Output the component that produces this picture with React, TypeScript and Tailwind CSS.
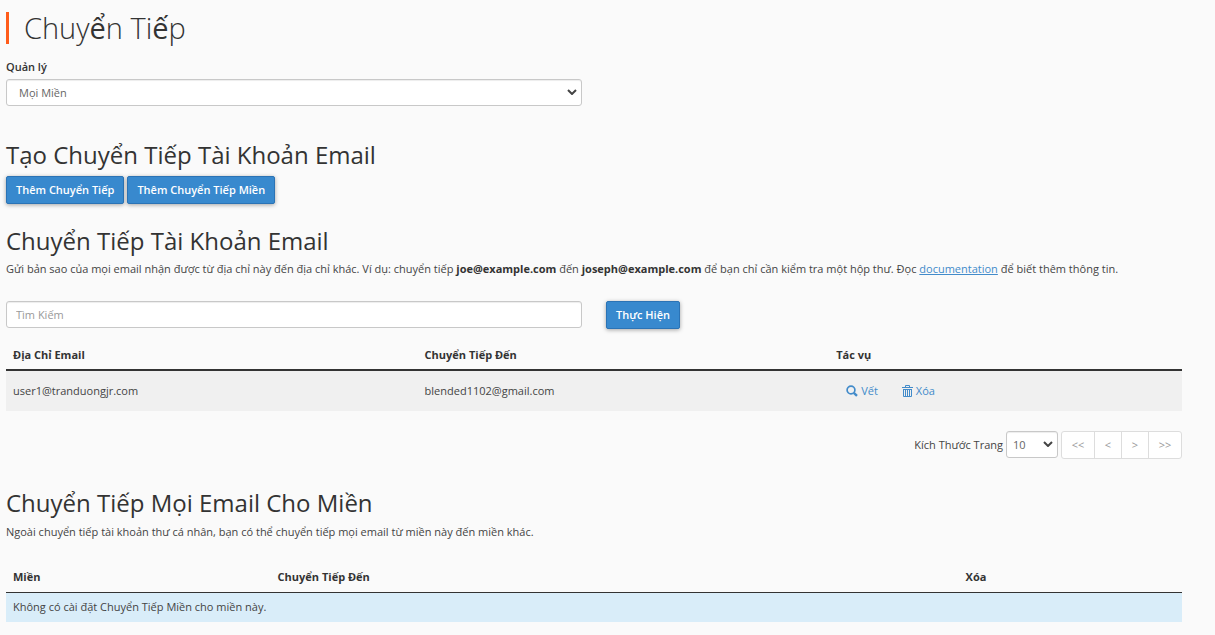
import type { ReactNode } from 'react';

const field =
  'rounded-[3px] border border-[#c8c8c8] bg-white text-[11px] text-[#666] shadow-[inset_0_1px_1px_rgba(0,0,0,0.075)] outline-none';

function PrimaryButton({ children }: { children: ReactNode }) {
  return (
    <button
      type="button"
      className="rounded-xs border border-[#2b73b5] bg-[#3889ce] px-[9px] py-[5px] text-[11px] leading-4 font-semibold text-white shadow-[0_1px_4px_rgba(0,0,0,0.35)]"
    >
      {children}
    </button>
  );
}

function Chevron({ className }: { className: string }) {
  return (
    <svg viewBox="0 0 10 6" className={className} fill="none" stroke="#444" strokeWidth="2" aria-hidden="true">
      <path d="M1 1l4 4 4-4" />
    </svg>
  );
}

function SearchIcon() {
  return (
    <svg viewBox="0 0 12 12" className="size-3" fill="none" stroke="#428bca" aria-hidden="true">
      <circle cx="5" cy="5" r="3.9" strokeWidth="1.7" />
      <path d="M7.8 7.8l3.2 3" strokeWidth="2.4" />
    </svg>
  );
}

function TrashIcon() {
  return (
    <svg viewBox="0 0 11 12" className="h-3 w-[11px]" fill="none" stroke="#428bca" strokeWidth="1" aria-hidden="true">
      <path d="M0 2.5h11M3.5 2.5v-2h4v2M1.5 4v7.5h8V4M1 4.5h9M3.5 4.5v7M5.5 4.5v7M7.5 4.5v7" />
    </svg>
  );
}

function SectionTitle({ children }: { children: ReactNode }) {
  return <h2 className="text-2xl leading-7 font-normal text-[#333]">{children}</h2>;
}

export default function App() {
  return (
    <main className="min-h-screen bg-[#fafafa] pt-3 pr-[33px] pb-3 pl-1.5 font-['Open_Sans','Noto_Sans',sans-serif] text-[11px] leading-4 text-[#444]">
      <h1 className="flex items-center border-l-3 border-[#ff5c1a] pl-[15px] text-[29px] leading-8 font-light text-[#333]">
        <span>
          Chuy<span className="font-normal">ể</span>n Ti<span className="font-normal">ế</span>p
        </span>
      </h1>

      <div className="mt-[15px] grid grid-cols-2 gap-6">
        <div>
          <label htmlFor="domain" className="block font-semibold text-[#333]">
            Quản lý
          </label>
          <div className="relative mt-1">
            <select id="domain" className={`${field} block h-[27px] w-full appearance-none pr-6 pl-3`}>
              <option>Mọi Miền</option>
            </select>
            <Chevron className="pointer-events-none absolute top-2.5 right-[5px] h-1.5 w-2.5" />
          </div>
        </div>
      </div>

      <section className="mt-[35px]">
        <SectionTitle>Tạo Chuyển Tiếp Tài Khoản Email</SectionTitle>
        <div className="mt-[7px] flex gap-[3px]">
          <PrimaryButton>Thêm Chuyển Tiếp</PrimaryButton>
          <PrimaryButton>Thêm Chuyển Tiếp Miền</PrimaryButton>
        </div>
      </section>

      <section className="mt-[23px]">
        <SectionTitle>Chuyển Tiếp Tài Khoản Email</SectionTitle>
        <p className="mt-1.5">
          Gửi bản sao của mọi email nhận được từ địa chỉ này đến địa chỉ khác. Ví dụ: chuyển tiếp{' '}
          <strong className="text-[#333]">joe@example.com</strong> đến{' '}
          <strong className="text-[#333]">joseph@example.com</strong> để bạn chỉ cần kiểm tra một hộp thư. Đọc{' '}
          <a href="#documentation" className="text-[#428bca] underline">
            documentation
          </a>{' '}
          để biết thêm thông tin.
        </p>

        <form className="mt-6 grid grid-cols-2 items-start gap-6">
          <input
            type="text"
            aria-label="Tìm Kiếm"
            placeholder="Tìm Kiếm"
            className={`${field} h-[27px] w-full px-[9px] placeholder:text-[#999]`}
          />
          <div className="flex">
            <PrimaryButton>Thực Hiện</PrimaryButton>
          </div>
        </form>

        <table className="mt-[11px] w-full table-fixed border-collapse text-left">
          <thead className="text-[#333]">
            <tr className="h-[30px] border-b-2 border-[#333]">
              <th className="w-[35%] px-[7px] font-bold">Địa Chỉ Email</th>
              <th className="w-[35%] px-[7px] font-bold">Chuyển Tiếp Đến</th>
              <th className="w-[30%] px-[7px] font-bold">Tác vụ</th>
            </tr>
          </thead>
          <tbody>
            <tr className="h-[41px] bg-[#f0f0f0]">
              <td className="px-[7px]">user1@tranduongjr.com</td>
              <td className="px-[7px]">blended1102@gmail.com</td>
              <td className="px-[7px]">
                <div className="flex gap-6 pl-2.5 text-[#428bca]">
                  <a href="#trace" className="flex items-center gap-[3px]">
                    <SearchIcon />
                    Vết
                  </a>
                  <a href="#delete" className="flex items-center gap-[3px]">
                    <TrashIcon />
                    Xóa
                  </a>
                </div>
              </td>
            </tr>
          </tbody>
        </table>

        <div className="mt-5 flex items-start justify-end gap-[3px]">
          <label htmlFor="page-size" className="leading-7">
            Kích Thước Trang
          </label>
          <div className="relative">
            <select id="page-size" className={`${field} block h-[27px] w-[52px] appearance-none pl-1.5`}>
              <option>10</option>
            </select>
            <Chevron className="pointer-events-none absolute top-2.5 right-[5px] h-1.5 w-2.5" />
          </div>
          <nav className="flex h-7 divide-x divide-[#ddd] rounded-[3px] border border-[#ddd] bg-white text-[#999]">
            <button type="button" className="w-[33px]">{'<<'}</button>
            <button type="button" className="w-[27px]">{'<'}</button>
            <button type="button" className="w-[27px]">{'>'}</button>
            <button type="button" className="w-8">{'>>'}</button>
          </nav>
        </div>
      </section>

      <section className="mt-[30px]">
        <SectionTitle>Chuyển Tiếp Mọi Email Cho Miền</SectionTitle>
        <p className="mt-[7px]">
          Ngoài chuyển tiếp tài khoản thư cá nhân, bạn có thể chuyển tiếp mọi email từ miền này đến miền khác.
        </p>
        <table className="mt-[22px] w-full table-fixed border-collapse text-left">
          <thead className="text-[#333]">
            <tr className="h-[30px] border-b border-[#333]">
              <th className="w-[22.5%] px-[7px] font-bold">Miền</th>
              <th className="w-[58.5%] px-[7px] font-bold">Chuyển Tiếp Đến</th>
              <th className="w-[19%] px-[7px] font-bold">Xóa</th>
            </tr>
          </thead>
          <tbody>
            <tr className="h-[30px] bg-[#d9edf9]">
              <td colSpan={3} className="px-[7px]">
                Không có cài đặt Chuyển Tiếp Miền cho miền này.
              </td>
            </tr>
          </tbody>
        </table>
      </section>
    </main>
  );
}
